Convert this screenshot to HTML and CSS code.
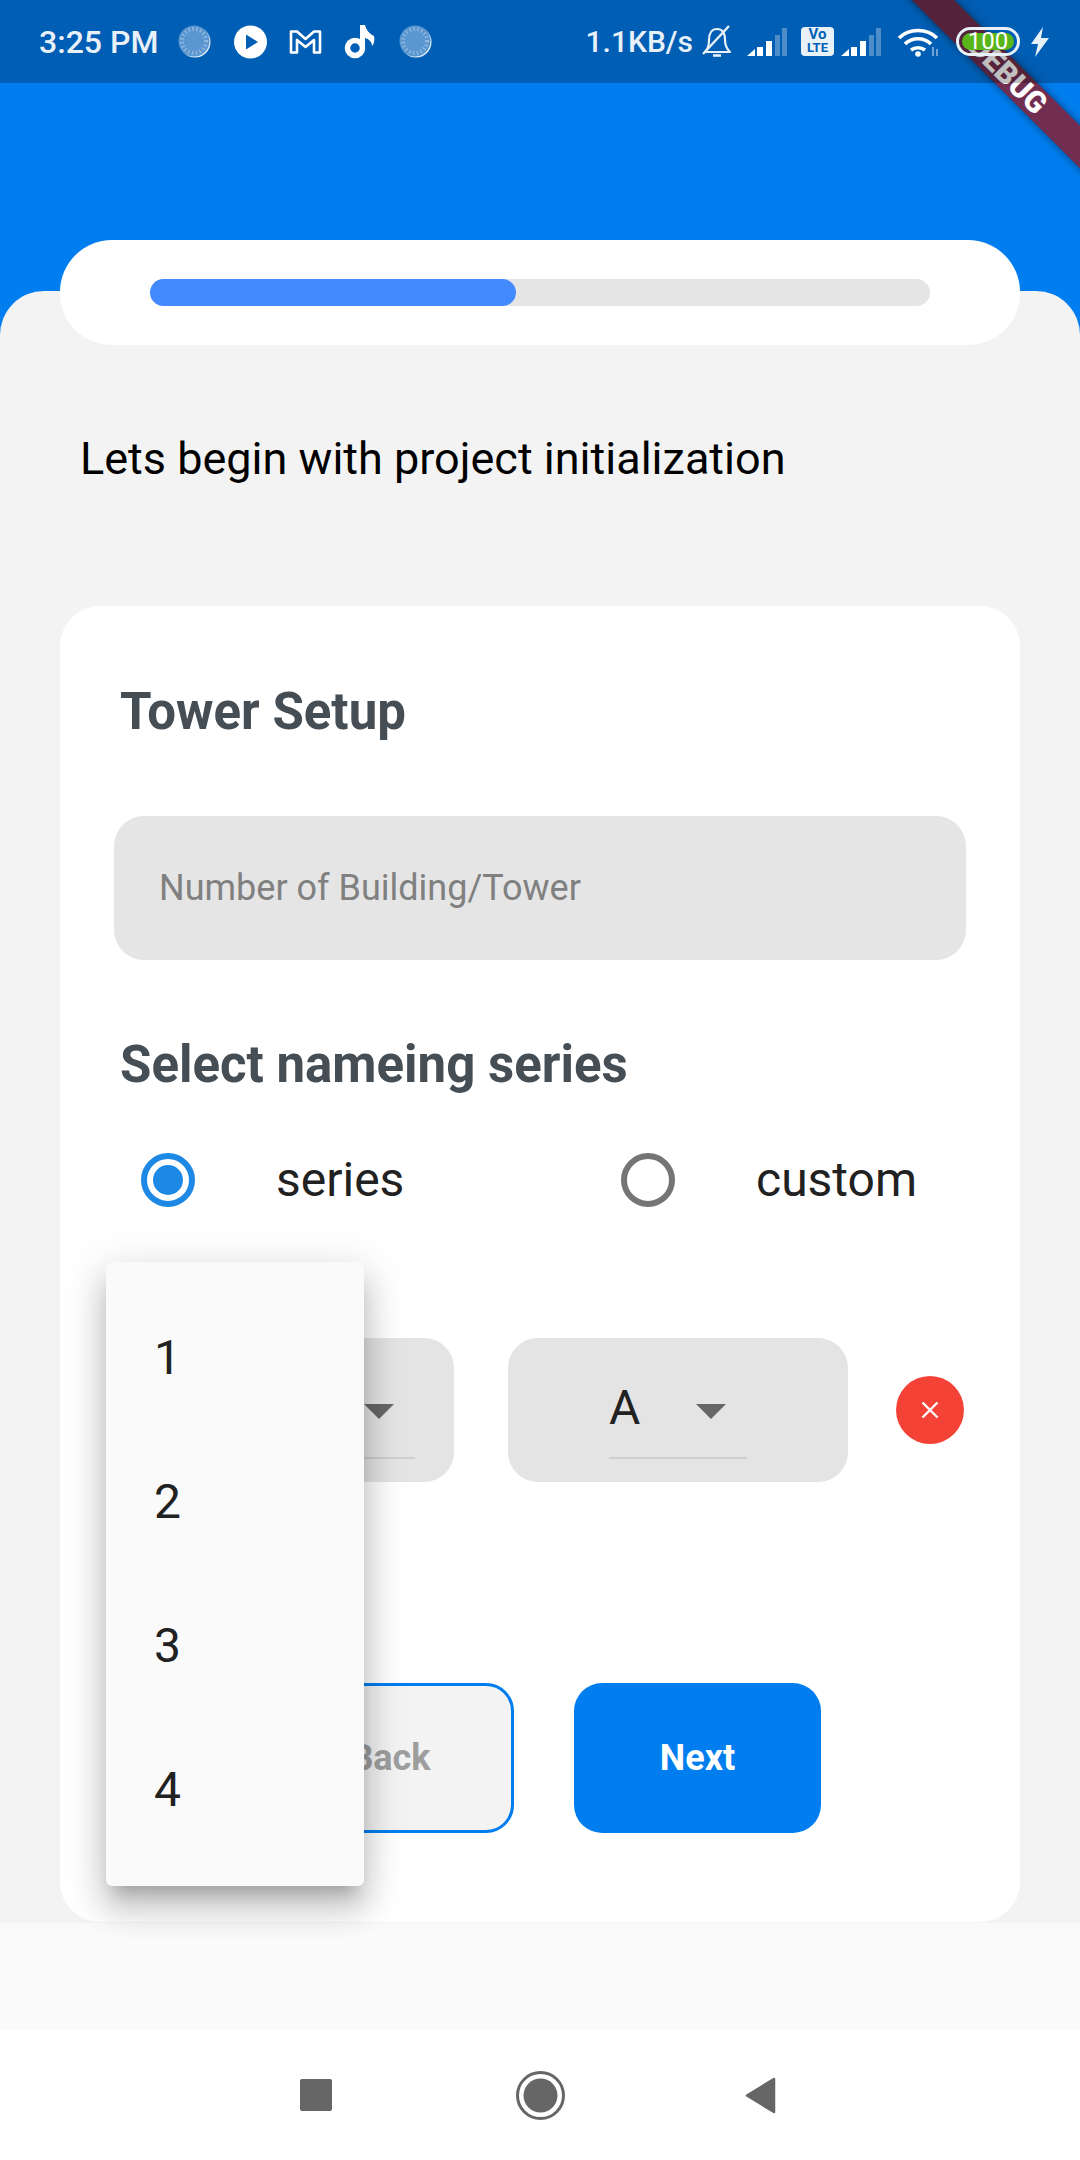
FILE: index.html
```html
<!DOCTYPE html>
<html lang="en">
<head>
  <meta charset="UTF-8">
  <title>Project Setup</title>
  <link rel="stylesheet" href="styles.css">
</head>
<body>
  <div class="screen">
    <div class="blueHeader"></div>

    <div class="panel">
      <div class="progressPill">
        <div class="progressTrack"><div class="progressFill"></div></div>
      </div>

      <p class="intro">Lets begin with project initialization</p>

      <div class="card">
        <h2 class="cardTitle">Tower Setup</h2>
        <div class="textInput">Number of Building/Tower</div>

        <h2 class="cardTitle seriesTitle">Select nameing series</h2>
        <div class="radioRow">
          <div class="radioOption">
            <span class="radio radioOn"></span>
            <span class="radioLabel">series</span>
          </div>
          <div class="radioOption">
            <span class="radio"></span>
            <span class="radioLabel">custom</span>
          </div>
        </div>

        <div class="selectRow">
          <div class="selectBox selectFirst">
            <div class="selectInner"><span class="selectValue">1</span><span class="selectArrow"></span></div>
          </div>
          <div class="selectBox selectSecond">
            <div class="selectInner"><span class="selectValue">A</span><span class="selectArrow"></span></div>
          </div>
          <div class="removeBtn">
            <svg width="22" height="22" viewBox="0 0 22 22"><path d="M3.5 3.5L18.5 18.5M18.5 3.5L3.5 18.5" stroke="#fff" stroke-width="2.4" fill="none"/></svg>
          </div>
        </div>

        <div class="buttonRow">
          <div class="navBtn backBtn">Back</div>
          <div class="navBtn nextBtn">Next</div>
        </div>
      </div>
    </div>

    <div class="bottomStrip"></div>

    <div class="systemNav">
      <span class="navSquare"></span>
      <svg class="navHome" width="49" height="49" viewBox="0 0 49 49"><circle cx="24.5" cy="24.5" r="23" fill="none" stroke="#666" stroke-width="3"/><circle cx="24.5" cy="24.5" r="17" fill="#666"/></svg>
      <svg class="navBack" width="31" height="37" viewBox="0 0 31 37"><path d="M29 2L2 18.5L29 35Z" fill="#666" stroke="#666" stroke-width="2.5" stroke-linejoin="round"/></svg>
    </div>

    <!-- open dropdown -->
    <div class="dropMenu">
      <div class="dropItem">1</div>
      <div class="dropItem">2</div>
      <div class="dropItem">3</div>
      <div class="dropItem">4</div>
    </div>

    <div class="debugBanner">DEBUG</div>

    <div class="statusBar">
      <div class="statusLeft">
        <span class="statusText statusTime">3:25 PM</span>
        <svg width="34" height="34" viewBox="0 0 34 34"><circle cx="17" cy="17" r="15.5" fill="#fff" opacity=".9"/><circle cx="16" cy="16" r="15.5" fill="#5a96d0"/><circle cx="16" cy="16" r="12" fill="none" stroke="#94bae0" stroke-width="4" stroke-dasharray="1.3 2.6"/></svg>
        <svg width="33" height="34" viewBox="0 0 33 34"><circle cx="16.5" cy="17" r="16.5" fill="#fff"/><path d="M12 9.5L24 17L12 24.5Z" fill="#0060b6"/></svg>
        <svg width="33" height="26" viewBox="0 0 33 26"><path d="M2 2.5H8L16.5 10L25 2.5H31V23.5H25V11L16.5 18L8 11V23.5H2Z" fill="none" stroke="#fff" stroke-width="2.6" stroke-linejoin="round"/></svg>
        <svg width="33" height="35" viewBox="0 0 33 35"><circle cx="11" cy="24" r="7.5" fill="none" stroke="#fff" stroke-width="5.5"/><path d="M16 1H21C22 6 26 10 30 12C31 16 30 20 28 22C28 18 25 15 21 14V24H16Z" fill="#fff"/></svg>
        <svg width="34" height="34" viewBox="0 0 34 34"><circle cx="17" cy="17" r="15.5" fill="#fff" opacity=".9"/><circle cx="16" cy="16" r="15.5" fill="#5a96d0"/><circle cx="16" cy="16" r="12" fill="none" stroke="#94bae0" stroke-width="4" stroke-dasharray="1.3 2.6"/></svg>
      </div>
      <div class="statusRight">
        <span class="statusText speed">1.1KB/s</span>
        <svg class="bell" width="32" height="33" viewBox="0 0 32 33"><path d="M4 27C7 24 8 20 8 15C8 8 11 4 16 4C21 4 24 8 24 15C24 20 26 24 29 27Z" fill="none" stroke="#e8f0f8" stroke-width="2.2" stroke-linejoin="round"/><path d="M12 30.5H20" stroke="#e8f0f8" stroke-width="2.6"/><path d="M2 29L28 1" stroke="#e8f0f8" stroke-width="2.4"/></svg>
        <svg class="signalOne" width="40" height="29" viewBox="0 0 40 29"><path d="M0 29L8 22V29ZM10 20H16V29H10ZM19 14H25V29H19Z" fill="#fff"/><path d="M28 8H33V29H28ZM35 1H40V29H35Z" fill="#fff" opacity=".3"/></svg>
        <div class="volte"><span class="volteTop">Vo</span><span>LTE</span></div>
        <svg class="signalTwo" width="40" height="29" viewBox="0 0 40 29"><path d="M0 29L8 22V29ZM10 20H16V29H10ZM19 14H25V29H19Z" fill="#fff"/><path d="M28 8H33V29H28ZM35 1H40V29H35Z" fill="#fff" opacity=".3"/></svg>
        <svg class="wifi" width="43" height="30" viewBox="0 0 43 30"><path d="M2 11C12 1 30 1 40 11M8 17C15 10 27 10 34 17M14 23C18 20 24 20 28 23" fill="none" stroke="#fff" stroke-width="3.6"/><circle cx="21" cy="27" r="2.8" fill="#fff"/><path d="M36 29V20M40 29V22" stroke="#8fb5dc" stroke-width="1.6"/></svg>
        <div class="battery"><span class="batteryLevel">100</span></div>
        <svg class="bolt" width="19" height="30" viewBox="0 0 19 30"><path d="M13 0L1 17H8L5 30L19 11H11Z" fill="#e8f0f8"/></svg>
      </div>
    </div>
  </div>
</body>
</html>
```

FILE: styles.css
```css
* {
  box-sizing: border-box;
}

body {
  margin: 0;
  font-family: Roboto, "Liberation Sans", sans-serif;
}

.screen {
  position: relative;
  width: 1080px;
  height: 2160px;
  overflow: hidden;
  display: flex;
  flex-direction: column;
  background-color: white;
}

.blueHeader {
  height: 340px;
  flex: none;
  background-color: #007ef0;
}

.panel {
  height: 1632px;
  margin-top: -49px;
  flex: none;
  background-color: #f3f3f3;
  border-radius: 44px 44px 0 0;
  padding: 0 60px;
}

.progressPill {
  margin-top: -51px;
  height: 105px;
  background-color: white;
  border-radius: 52px;
  padding: 39px 90px;
}

.progressTrack {
  height: 27px;
  background-color: #e5e5e5;
  border-radius: 14px;
}

.progressFill {
  width: 46.9%;
  height: 27px;
  background-color: #448aff;
  border-radius: 14px;
}

.intro {
  margin: 89px 0 122px 20px;
  font-size: 45px;
  line-height: 50px;
  color: black;
}

.card {
  background-color: white;
  border-radius: 40px;
  padding: 78px 54px 89px;
}

.cardTitle {
  margin: 0 0 0 6px;
  font-size: 51px;
  line-height: 56px;
  font-weight: 700;
  color: #454d55;
}

.textInput {
  margin-top: 76px;
  height: 144px;
  background-color: #e5e5e5;
  border-radius: 30px;
  padding-left: 45px;
  display: flex;
  align-items: center;
  font-size: 36px;
  color: #808080;
}

.seriesTitle {
  margin-top: 77px;
}

.radioRow {
  margin-top: 60px;
  padding-left: 27px;
  display: flex;
}

.radioOption {
  width: 480px;
  flex: none;
  display: flex;
  align-items: center;
}

.radio {
  width: 54px;
  height: 54px;
  border: 6px solid #757575;
  border-radius: 50%;
  display: flex;
  align-items: center;
  justify-content: center;
}

.radioOn {
  border-color: #1e88e5;
}

.radioOn::after {
  content: "";
  width: 30px;
  height: 30px;
  border-radius: 50%;
  background-color: #1e88e5;
}

.radioLabel {
  margin-left: 81px;
  font-size: 48px;
  line-height: 54px;
  color: #212121;
}

.selectRow {
  margin-top: 131px;
  display: flex;
  align-items: center;
}

.selectBox {
  width: 340px;
  height: 144px;
  background-color: #e4e4e4;
  border-radius: 30px;
  display: flex;
  justify-content: flex-end;
}

.selectFirst {
  padding-right: 39px;
}

.selectSecond {
  margin-left: 54px;
  padding-right: 101px;
}

.selectInner {
  width: 138px;
  height: 121px;
  border-bottom: 2px solid #cfcfcf;
  padding-right: 21px;
  display: flex;
  align-items: center;
  justify-content: space-between;
  font-size: 48px;
  color: #212121;
}

.selectValue {
  margin-top: 20px;
}

.selectArrow {
  width: 0;
  height: 0;
  margin-top: 28px;
  border-left: 15px solid transparent;
  border-right: 15px solid transparent;
  border-top: 15px solid #666;
}

.removeBtn {
  width: 68px;
  height: 68px;
  margin-left: 48px;
  background-color: #f44336;
  border-radius: 50%;
  display: flex;
  align-items: center;
  justify-content: center;
}

.buttonRow {
  margin-top: 201px;
  padding-left: 153px;
  display: flex;
  gap: 60px;
}

.navBtn {
  width: 247px;
  height: 150px;
  border-radius: 28px;
  display: flex;
  align-items: center;
  justify-content: center;
  font-size: 36px;
  font-weight: 700;
}

.backBtn {
  background-color: #f3f3f3;
  border: 3px solid #007ef0;
  color: #9e9e9e;
}

.nextBtn {
  background-color: #007ef0;
  color: white;
}

.bottomStrip {
  height: 107px;
  flex: none;
  background-color: #fafafa;
}

.systemNav {
  height: 130px;
  flex: none;
  padding-left: 300px;
  display: flex;
  align-items: center;
}

.navSquare {
  width: 32px;
  height: 32px;
  background-color: #666;
  border-radius: 2px;
}

.navHome {
  margin-left: 184px;
}

.navBack {
  margin-left: 180px;
}

/* dropdown sits over the card */
.dropMenu {
  position: absolute;
  left: 106px;
  top: 1262px;
  width: 258px;
  height: 624px;
  padding: 24px 0;
  background-color: #fafafa;
  border-radius: 6px;
  box-shadow: 0 15px 15px -9px rgba(0, 0, 0, 0.2), 0 24px 30px 3px rgba(0, 0, 0, 0.14), 0 9px 42px 6px rgba(0, 0, 0, 0.12);
}

.dropItem {
  height: 144px;
  padding: 0 0 2px 48px;
  display: flex;
  align-items: center;
  font-size: 48px;
  color: #212121;
}

.debugBanner {
  position: absolute;
  left: 808px;
  top: 60px;
  width: 400px;
  height: 30px;
  transform: rotate(45deg);
  background-color: #722e50;
  box-shadow: 0 0 8px rgba(0, 0, 0, 0.5);
  text-align: center;
  line-height: 30px;
  font-size: 30px;
  font-weight: 900;
  color: white;
}

.statusBar {
  position: absolute;
  left: 0;
  top: 0;
  width: 1080px;
  height: 83px;
  background-color: rgba(0, 0, 0, 0.25);
  padding: 0 31px 0 39px;
  display: flex;
  align-items: center;
  justify-content: space-between;
}

.statusLeft,
.statusRight {
  display: flex;
  align-items: center;
}

.statusLeft {
  gap: 22px;
}

.statusText {
  font-size: 30px;
  font-weight: 500;
  color: #e8f0f8;
}

.statusTime {
  margin-right: -2px;
  font-size: 32px;
}

.bell {
  margin-left: 8px;
}

.signalOne {
  margin-left: 14px;
}

.volte {
  width: 33px;
  height: 29px;
  margin-left: 14px;
  background-color: #e8f0f8;
  border-radius: 4px;
  display: flex;
  flex-direction: column;
  align-items: center;
  font-size: 13px;
  line-height: 13px;
  font-weight: 700;
  color: #0060b6;
  padding-top: 1px;
}

.volteTop {
  font-size: 15px;
}

.signalTwo {
  margin-left: 7px;
}

.wifi {
  margin-left: 16px;
}

.battery {
  width: 64px;
  height: 29px;
  margin-left: 16px;
  border: 3px solid #e8f0f8;
  border-radius: 15px;
  padding: 3px;
}

.batteryLevel {
  display: block;
  height: 17px;
  background-color: #58b51a;
  border-radius: 9px;
  text-align: center;
  font-size: 24px;
  line-height: 17px;
  color: white;
}

.bolt {
  margin-left: 10px;
}
```
